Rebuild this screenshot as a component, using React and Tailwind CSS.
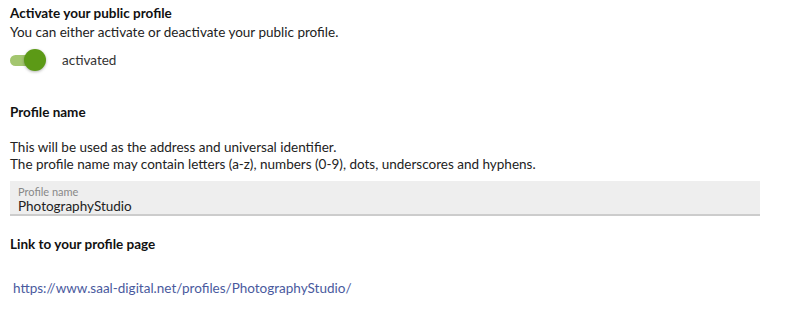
export default function App() {
  return (
    <div className="w-[798px] h-[322px] bg-white text-[#222] font-['Lato',sans-serif] text-[13.5px] leading-[17px] relative">
      <div className="pl-[10px] pt-[5px]">
        <div className="font-bold text-[#111]">Activate your public profile</div>
        <div className="mt-[2px]">You can either activate or deactivate your public profile.</div>
        <div className="flex items-center mt-[8px] h-[22px]">
          <div className="relative w-[37px] h-[22px] flex items-center">
            <div className="w-[32px] h-[11px] rounded-full bg-[#a3c66f]" />
            <div className="absolute left-[14px] top-0 w-[22px] h-[22px] rounded-full bg-[#5c9a16] shadow-[0_1px_3px_rgba(0,0,0,0.3)]" />
          </div>
          <span className="ml-[15px] text-[#333]">activated</span>
        </div>

        <div className="font-bold text-[#111] mt-[33px]">Profile name</div>
        <div className="mt-[18px]">This will be used as the address and universal identifier.</div>
        <div>The profile name may contain letters (a-z), numbers (0-9), dots, underscores and hyphens.</div>

        <div className="mt-[8px] w-[750px] h-[35px] bg-[#eeeeee] border-b-2 border-[#cccccc] pl-[8px] pt-[4px]">
          <div className="text-[11px] leading-[13px] text-[#888]">Profile name</div>
          <div className="text-[13.5px] leading-[16px] text-[#222]">PhotographyStudio</div>
        </div>

        <div className="font-bold text-[#111] mt-[20px]">Link to your profile page</div>
        <div className="mt-[27px] pl-[3px] text-[#4a5a9e]">https://www.saal-digital.net/profiles/PhotographyStudio/</div>
      </div>
    </div>
  );
}
